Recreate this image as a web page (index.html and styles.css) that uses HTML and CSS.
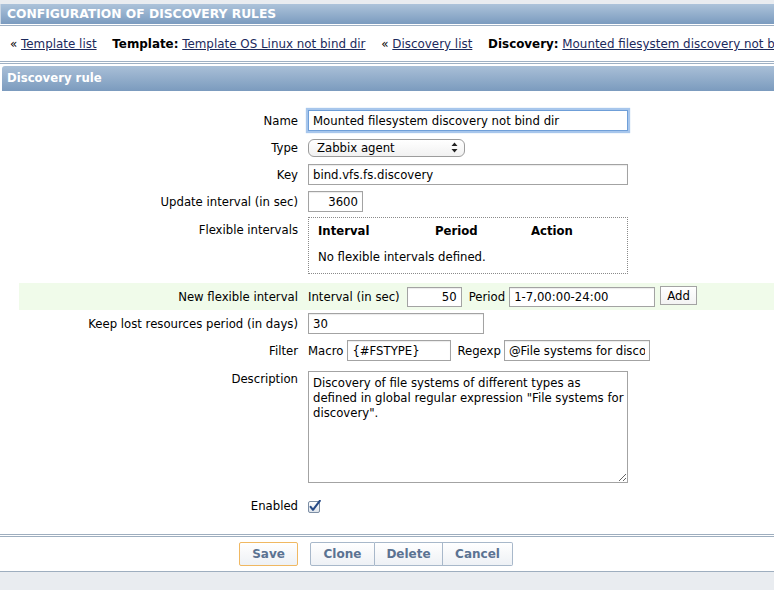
FILE: index.html
```html
<!DOCTYPE html>
<html>
<head>
<meta charset="utf-8">
<link rel="stylesheet" href="styles.css">
</head>
<body>
<div class="topstrip"></div>
<div class="header">CONFIGURATION OF DISCOVERY RULES</div>
<div class="nav">
  <span class="item">« <a href="#">Template list</a></span>
  <span class="item"><b>Template:</b> <a href="#">Template OS Linux not bind dir</a></span>
  <span class="item">« <a href="#">Discovery list</a></span>
  <span class="item"><b>Discovery:</b> <a href="#">Mounted filesystem discovery not bind dir</a></span>
</div>
<div class="bar">Discovery rule</div>
<div class="form">
  <div class="row">
    <div class="lbl">Name</div>
    <div class="fld"><input class="in w320 focus" value="Mounted filesystem discovery not bind dir"></div>
  </div>
  <div class="row">
    <div class="lbl">Type</div>
    <div class="fld">
      <div class="select"><span>Zabbix agent</span>
        <svg width="7" height="11" viewBox="0 0 7 11"><path d="M3.5 0.5 L6.5 4 L0.5 4 Z M0.5 7 L6.5 7 L3.5 10.5 Z" fill="#222"/></svg>
      </div>
    </div>
  </div>
  <div class="row">
    <div class="lbl">Key</div>
    <div class="fld"><input class="in w320" value="bind.vfs.fs.discovery"></div>
  </div>
  <div class="row">
    <div class="lbl">Update interval (in sec)</div>
    <div class="fld"><input class="in w55 num" value="3600"></div>
  </div>
  <div class="row top">
    <div class="lbl lbl-top">Flexible intervals</div>
    <div class="fld">
      <div class="flexbox">
        <div class="fhead"><span>Interval</span><span>Period</span><span>Action</span></div>
        <div class="fempty">No flexible intervals defined.</div>
      </div>
    </div>
  </div>
  <div class="row green">
    <div class="lbl">New flexible interval</div>
    <div class="fld inline">
      <span>Interval (in sec)</span>
      <input class="in w55 num h20 gap7" value="50">
      <span class="gap7">Period</span>
      <input class="in w146 h20 gap4" value="1-7,00:00-24:00">
      <button class="addbtn">Add</button>
    </div>
  </div>
  <div class="row">
    <div class="lbl">Keep lost resources period (in days)</div>
    <div class="fld"><input class="in w176" value="30"></div>
  </div>
  <div class="row">
    <div class="lbl">Filter</div>
    <div class="fld inline">
      <span>Macro</span>
      <input class="in w104 gap4" value="{#FSTYPE}">
      <span class="gap6">Regexp</span>
      <input class="in w146 gap3" value="@File systems for discovery">
    </div>
  </div>
  <div class="row top desc">
    <div class="lbl lbl-desc">Description</div>
    <div class="fld"><textarea class="ta">Discovery of file systems of different types as defined in global regular expression "File systems for discovery".</textarea></div>
  </div>
  <div class="row">
    <div class="lbl">Enabled</div>
    <div class="fld">
      <svg class="chk" width="13" height="13" viewBox="0 0 13 13">
        <defs><linearGradient id="cg" x1="0" y1="0" x2="0" y2="1"><stop offset="0" stop-color="#ffffff"/><stop offset="1" stop-color="#dde3ea"/></linearGradient></defs>
        <rect x="0.5" y="1.5" width="11" height="11" rx="1.5" fill="url(#cg)" stroke="#7c8ea4"/>
        <path d="M2.6 6.8 L5 9.8 L11.8 0.8" fill="none" stroke="#264a86" stroke-width="2.1" stroke-linecap="round" stroke-linejoin="round"/>
      </svg>
    </div>
  </div>
</div>
<div class="footer">
  <button class="btn save">Save</button>
  <div class="group">
    <button class="btn g">Clone</button>
    <button class="btn g">Delete</button>
    <button class="btn g">Cancel</button>
  </div>
</div>
<div class="bottom"></div>
</body>
</html>
```

FILE: styles.css
```css
html, body {
  margin: 0;
  padding: 0;
  background: #ffffff;
}
body {
  font-family: "DejaVu Sans", Verdana, sans-serif;
  font-size: 11.7px;
  color: #000;
  width: 774px;
  height: 590px;
  overflow: hidden;
}
.topstrip {
  height: 4px;
  background: #e9ecf0;
}
.header {
  height: 20px;
  line-height: 20px;
  padding-left: 6px;
  font-weight: bold;
  font-size: 12.3px;
  color: #ffffff;
  background: linear-gradient(#adc3da, #7b9bbf);
  border-left: 1px solid #c9d6e4;
}
.nav {
  border-top: 1px solid #9fb0c3;
  margin-top: 1px;
  height: 34px;
  line-height: 34px;
  padding-top: 1px;
  padding-left: 10px;
  font-size: 11.9px;
  white-space: nowrap;
  overflow: hidden;
  border-bottom: 3px double #9fb0c3;
}
.nav .item {
  margin-right: 12px;
}
.nav a {
  color: #1c2a5c;
  text-decoration: underline;
}
.nav b {
  font-weight: bold;
}
.bar {
  margin: 2px 0 0 2px;
  height: 25px;
  line-height: 25px;
  padding-left: 5px;
  font-weight: bold;
  color: #ffffff;
  background: linear-gradient(#a9bfd7, #7b9bbe);
  border-radius: 3px 0 0 0;
}
.form {
  margin: 16px 0 0 19px;
}
.row {
  display: grid;
  grid-template-columns: 279px 1fr;
  column-gap: 10px;
  align-items: center;
  padding: 3px 0;
}
.row.top {
  align-items: start;
}
.lbl {
  text-align: right;
  white-space: nowrap;
  line-height: 15px;
  padding-top: 2px;
}
.lbl-top {
  padding-top: 5px;
}
.lbl-desc {
  padding-top: 5px;
}
.fld {
  display: flex;
  align-items: center;
  min-height: 21px;
}
.fld.inline {
  white-space: nowrap;
}
.in {
  box-sizing: border-box;
  height: 21px;
  border: 1px solid #a3a3a3;
  box-shadow: inset 0 1px 1px rgba(0,0,0,0.08);
  padding: 0 4px;
  font-family: "DejaVu Sans", Verdana, sans-serif;
  font-size: 11.7px;
  color: #000;
  background: #fff;
  outline: none;
  margin: 0;
}
.in.focus {
  border: 1px solid #6f9fd8;
  box-shadow: 0 0 1px 2px #a7c6ec;
}
.h20 { height: 20px; }
.w320 { width: 320px; }
.w55 { width: 55px; }
.w146 { width: 146px; }
.w176 { width: 176px; }
.w104 { width: 104px; }
.num { text-align: right; }
.gap3 { margin-left: 3px; }
.gap4 { margin-left: 4px; }
.gap6 { margin-left: 6px; }
.gap7 { margin-left: 7px; }
.select {
  box-sizing: border-box;
  width: 157px;
  height: 18px;
  border: 1px solid #9c9c9c;
  border-radius: 6px;
  background: linear-gradient(#ffffff, #f1f1f1);
  display: flex;
  align-items: center;
  justify-content: space-between;
  padding: 0 6px 0 8px;
}
.flexbox {
  box-sizing: border-box;
  width: 320px;
  height: 57px;
  border: 1px dotted #8a8a8a;
  padding: 6px 0 0 9px;
  margin-top: -1px;
}
.fhead {
  display: grid;
  grid-template-columns: 117px 96px auto;
  font-weight: bold;
  line-height: 15px;
}
.fempty {
  margin-top: 11px;
  line-height: 15px;
}
.row.green {
  background: #f0fbea;
  margin-top: 6px;
  padding: 3px 0 3px 0;
}
.addbtn {
  box-sizing: border-box;
  margin-left: 5px;
  width: 37px;
  height: 19px;
  border: 1px solid #a3a3a3;
  background: linear-gradient(#ffffff, #f3f3f3);
  font-family: "DejaVu Sans", Verdana, sans-serif;
  font-size: 11.7px;
  color: #000;
  padding: 0;
  align-self: flex-start;
  margin-top: 0;
}
.row.desc {
  padding-bottom: 9px;
}
.ta {
  box-sizing: border-box;
  width: 320px;
  height: 112px;
  margin: 4px 0 0 0;
  border: 1px solid #a3a3a3;
  padding: 4px 0 4px 4px;
  font-family: "DejaVu Sans", Verdana, sans-serif;
  font-size: 11.7px;
  line-height: 15px;
  color: #000;
  resize: both;
  outline: none;
}
.chk {
  display: block;
  margin-top: 1px;
}
.footer {
  margin-top: 15px;
  border-top: 3px double #9eaebf;
  border-bottom: 1px solid #9eaebf;
  height: 34px;
  display: flex;
  align-items: center;
  padding-left: 239px;
  gap: 12px;
}
.btn {
  box-sizing: border-box;
  height: 24px;
  padding: 0;
  font-family: "DejaVu Sans", Verdana, sans-serif;
  font-size: 12px;
  font-weight: bold;
  color: #5b7392;
  background: linear-gradient(#ffffff, #eef1f5);
  border: 1px solid #a8b8ca;
  border-radius: 2px;
}
.btn.save {
  width: 59px;
  border-color: #f0b862;
}
.group {
  display: flex;
}
.btn.g {
  border-radius: 0;
}
.btn.g + .btn.g {
  border-left: none;
}
.btn.g:nth-child(1) { width: 65px; border-radius: 2px 0 0 2px; }
.btn.g:nth-child(2) { width: 68px; }
.btn.g:nth-child(3) { width: 70px; border-radius: 0 2px 2px 0; }
.bottom {
  height: 30px;
  background: #e9ecf0;
}
```
